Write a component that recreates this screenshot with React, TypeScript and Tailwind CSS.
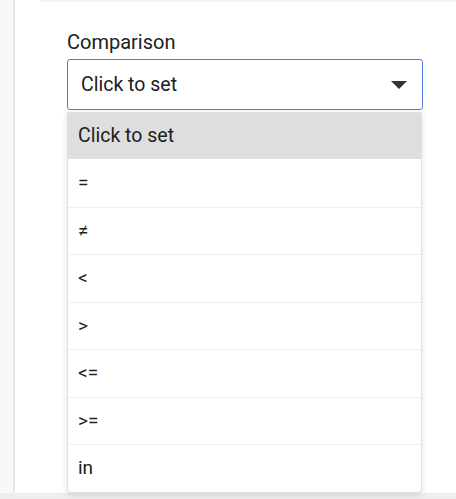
const options = ['=', '≠', '<', '>', '<=', '>=', 'in'];

export default function App() {
  return (
    <div className="w-[456px] h-[499px] bg-[#eeeeee] font-['Roboto',sans-serif] text-[#212121] overflow-hidden">
      <div className="flex h-[493px]">
        {/* left rail */}
        <div className="w-[15px] shrink-0 bg-[#f8f8f8] border-r-2 border-[#e6e6e6]" />
        <div className="flex-1 bg-white relative">
          <div className="absolute top-0 left-[25px] right-0 h-[2px] bg-[#f4f4f4]" />
          <div className="pl-[52px] pr-[33px] pt-[28px]">
            <div className="text-[20px] leading-[28px] mb-[3px]">Comparison</div>
            <div className="h-[51px] border border-[#4f7fd6] rounded-[3px] flex items-center justify-between pl-[13px] pr-[13px]">
              <span className="text-[19.5px]">Click to set</span>
              <svg width="18" height="10" viewBox="0 0 18 10" className="mr-[1px]">
                <path d="M1 1 L17 1 L9 9 Z" fill="#333" />
              </svg>
            </div>
            <div className="mt-[2px] mr-[1px] rounded-b-[4px] border border-[#e0e0e0] shadow-[0_2px_6px_rgba(0,0,0,0.12)] overflow-hidden bg-white">
              <div className="h-[46px] bg-[#dedede] flex items-center pl-[10px] text-[19.5px]">Click to set</div>
              {options.map((o, i) => (
                <div
                  key={o}
                  className={`h-[47.5px] flex items-center pl-[10px] border-t border-[#eeeeee] text-[19px] ${
                    i === 0 ? 'border-t-0' : ''
                  }`}
                >
                  {o}
                </div>
              ))}
            </div>
          </div>
        </div>
      </div>
    </div>
  );
}
